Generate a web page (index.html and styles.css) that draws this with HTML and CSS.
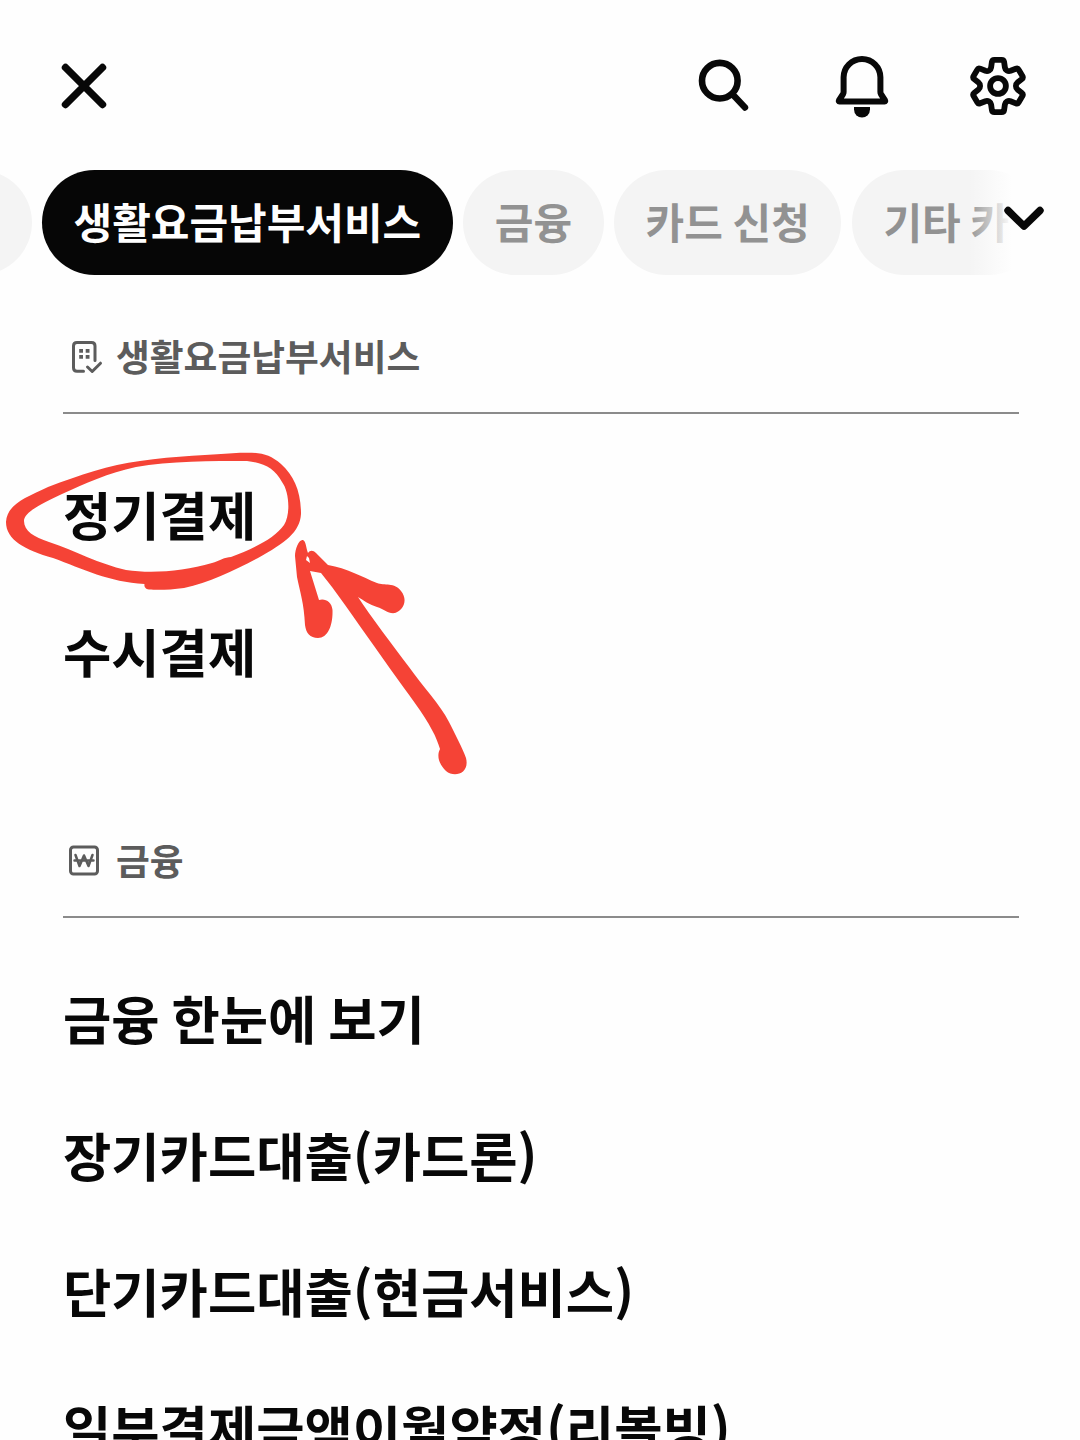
FILE: index.html
```html
<!DOCTYPE html>
<html lang="ko">
  <head>
    <meta charset="UTF-8" />
    <meta name="viewport" content="width=device-width, initial-scale=1.0" />
    <title>전체 메뉴</title>
    <link rel="stylesheet" href="styles.css">
  </head>
  <body>
    <header class="top-bar">
      <button class="icon-btn" aria-label="닫기">
        <svg width="60" height="60" viewBox="0 0 60 60">
          <path d="M11.5 11.5 48.5 48.5M48.5 11.5 11.5 48.5" stroke-width="7.4" />
        </svg>
      </button>
      <div class="top-actions">
        <button class="icon-btn" aria-label="검색">
          <svg width="60" height="64" viewBox="0 -2 60 64">
            <circle cx="25.8" cy="24.7" r="17.8" stroke-width="6.6" />
            <path d="M38.5 38.2 51 51.5" stroke-width="6.4" />
          </svg>
        </button>
        <button class="icon-btn" aria-label="알림">
          <svg width="60" height="66" viewBox="0 0 60 66">
            <path d="M12.6 23.3a18.4 18.4 0 0 1 36.8 0V38q0 1 .5 2l4.2 6.5q.5 1-.5 1H8.4q-1 0-.5-1L12.1 40q.5-1 .5-2z" stroke-width="6" />
            <path class="solid" d="M23 53h16v2.500a8 8 0 0 1-16 0z" />
          </svg>
        </button>
        <button class="icon-btn" aria-label="설정">
          <svg width="60" height="64" viewBox="0 -2 60 64">
            <path d="M26.3 3.900h7.400q2 0 2.400 2l.8 5.600q.3 2 2 3 1.800 1 3.700.3l5.200-2.100q1.900-.8 2.900 1l3.700 6.200q1 1.800-.5 3L49.500 26.400q-1.600 1.300-1.600 3.600t1.600 3.600L53.900 37.100q1.500 1.200.5 3L50.700 46.300q-1 1.800-2.900 1l-5.200-2.100q-1.900-.7-3.700.3-1.700 1-2 3l-.8 5.600q-.4 2-2.400 2h-7.400q-2 0-2.400-2l-.8-5.600q-.3-2-2-3-1.800-1-3.700-.3l-5.200 2.100q-1.900.8-2.900-1L5.600 40.100q-1-1.800.5-3l4.400-3.500q1.600-1.300 1.600-3.600t-1.600-3.600L6.100 22.900q-1.500-1.200-.5-3L9.300 13.700q1-1.800 2.900-1l5.200 2.100q1.900.7 3.700-.3 1.700-1 2-3l.8-5.600q.4-2 2.400-2z" stroke-width="5.800" />
            <circle cx="30" cy="30" r="7.900" stroke-width="5.800" />
          </svg>
        </button>
      </div>
    </header>

    <nav class="tabs">
      <div class="tab-list">
        <a class="tab tab-prev"></a>
        <a class="tab active">생활요금납부서비스</a>
        <a class="tab">금융</a>
        <a class="tab">카드 신청</a>
        <a class="tab">기타 카</a>
      </div>
      <div class="tab-more">
        <svg width="40" height="26" viewBox="0 0 40 26">
          <path d="M4 4.500 20 20.200 36 4.500" stroke-width="7.400" />
        </svg>
      </div>
    </nav>

    <main>
      <section class="menu-group">
        <h2 class="group-title">
          <svg class="building" width="32" height="34" viewBox="0 0 32 34">
            <path d="M12.500 31.200H6Q2.500 31.200 2.500 27.700V6Q2.500 2.500 6 2.500H20.500Q24 2.500 24 6V20.500M16.500 27l4.700 4.500 8.300-8.300" stroke-width="3" />
            <path class="solid" d="M8.200 9h3.800v3.800H8.200zM14.700 9h3.800v3.800h-3.800zM8.200 14.900h3.800v3.800H8.200zM14.700 14.900h3.800v3.800h-3.800z" />
          </svg>
          생활요금납부서비스
        </h2>
        <ul class="menu-list">
          <li>정기결제</li>
          <li>수시결제</li>
        </ul>
      </section>

      <section class="menu-group">
        <h2 class="group-title">
          <svg class="won" width="32" height="34" viewBox="0 0 32 34">
            <rect x="2.500" y="3" width="27" height="27" rx="3" stroke-width="3" />
            <path d="M7.500 11 11.500 22 16 11.500 20.500 22 24.500 11M6.500 16.500h19" stroke-width="2.500" />
          </svg>
          금융
        </h2>
        <ul class="menu-list">
          <li>금융 한눈에 보기</li>
          <li>장기카드대출(카드론)</li>
          <li>단기카드대출(현금서비스)</li>
          <li>일부결제금액이월약정(리볼빙)</li>
        </ul>
      </section>
    </main>

    <!-- hand drawn marker over the first menu item -->
    <svg class="marker" width="480" height="350" viewBox="0 440 480 350">
      <path fill-rule="evenodd" d="M6 522C7 505 24 498 48 487C80 475 109 465 140 461C175 456 211 455 240 452.800C260 452 269 454 281 464C294 476 301 491 301 514C300 532 285 543 258 558C235 570 209 583 184 588C170 590 157 590 149 589.500C145 589 144 586 144.500 584C109 582 83 569 53 558C25 550 6 540 6 522ZM24 521C24 531 34 537 49 542C76 551 99 564 126 570C153 574 184 571 212 563C219 561 225 557 231 557C253 549 275 538 284 525C291 514 289 491 282 482C275 469 265 463 247 461C213 461 169 461 136 467C108 473 86 483 62 494C43 503 24 512 24 521Z" />
      <path fill-rule="evenodd" d="M295 556C295 549 299 539 303 540C306 541 306 548 308 553C310 550 313 550 316 553L328 565C347 568 362 577 377 583C384 586 395 582 401 591C409 601 402 611 395 613C388 614 384 609 377 607C370 605 363 600 358 597C371 617 391 643 409 667C423 687 440 704 449 722C456 736 462 747 466 758C470 774 454 778 446 771C440 765 436 757 440 749C438 743 436 737 432 730C424 714 408 694 391 670C369 639 351 613 332 587L321 573L310 571L319 600C325 598 332 602 332.500 610C333 625 328 638 318 638C310 638 306 633 305 625C304 603 300 592 297 577ZM307 556L306 560L310 563L309 558Z" />
    </svg>
  </body>
</html>
```
FILE: styles.css
```css
* {
  box-sizing: border-box;
}
body {
  margin: 0;
  height: 1440px;
  overflow: hidden;
  position: relative;
  background-color: #fefefe;
  color: #080808;
  font-family: 'Noto Sans CJK KR', sans-serif;
}
svg {
  display: block;
  flex-shrink: 0;
  fill: none;
  stroke: currentColor;
  stroke-linecap: round;
  stroke-linejoin: round;
}
.solid {
  fill: currentColor;
  stroke: none;
}

.top-bar {
  display: flex;
  justify-content: space-between;
  align-items: flex-start;
  height: 170px;
  padding: 56px 52px 0 54px;
}
.top-actions {
  display: flex;
  align-items: flex-start;
  gap: 77px;
  margin-top: -2px;
}
.icon-btn {
  padding: 0;
  border: none;
  background: none;
  color: #080808;
}

.tabs {
  position: relative;
  height: 105px;
  overflow: hidden;
}
.tab-list {
  display: flex;
  gap: 10.5px;
  margin-left: -108.8px;
}
.tab {
  flex-shrink: 0;
  height: 105px;
  padding: 0 31.5px;
  border-radius: 53px;
  background-color: #f4f4f4;
  color: #929292;
  font-size: 42px;
  font-weight: bold;
  line-height: 102px;
  word-spacing: -2px;
  white-space: nowrap;
}
.tab-prev {
  width: 140.3px;
}
.tab.active {
  background-color: #060606;
  color: #fefefe;
}
/* fades the last tab out below the arrow */
.tab-more {
  position: absolute;
  top: 0;
  right: 0;
  width: 120px;
  height: 105px;
  padding: 36px 0 0 44px;
  background: linear-gradient(to right, rgba(254, 254, 254, 0) 8px, #fefefe 52px);
}

.menu-group {
  padding: 60px 61px 0 63px;
}
.group-title {
  display: flex;
  align-items: flex-start;
  box-sizing: content-box;
  height: 44px;
  margin: 0;
  padding-bottom: 33px;
  border-bottom: 2px solid #8b8b8b;
  color: #5c5c5c;
  font-size: 36.75px;
  font-weight: bold;
  line-height: 40px;
}
.building {
  margin: 5px 13px 0 8px;
}
.won {
  margin: 5px 16px 0 5px;
}
.menu-list {
  margin: 0;
  padding: 31px 0 61px;
  list-style: none;
}
.menu-list li {
  height: 136.5px;
  font-size: 52.5px;
  font-weight: bold;
  line-height: 136.5px;
  word-spacing: -2.8px;
  white-space: nowrap;
}

.marker {
  position: absolute;
  top: 440px;
  left: 0;
  fill: #f54336;
  stroke: none;
}
```
